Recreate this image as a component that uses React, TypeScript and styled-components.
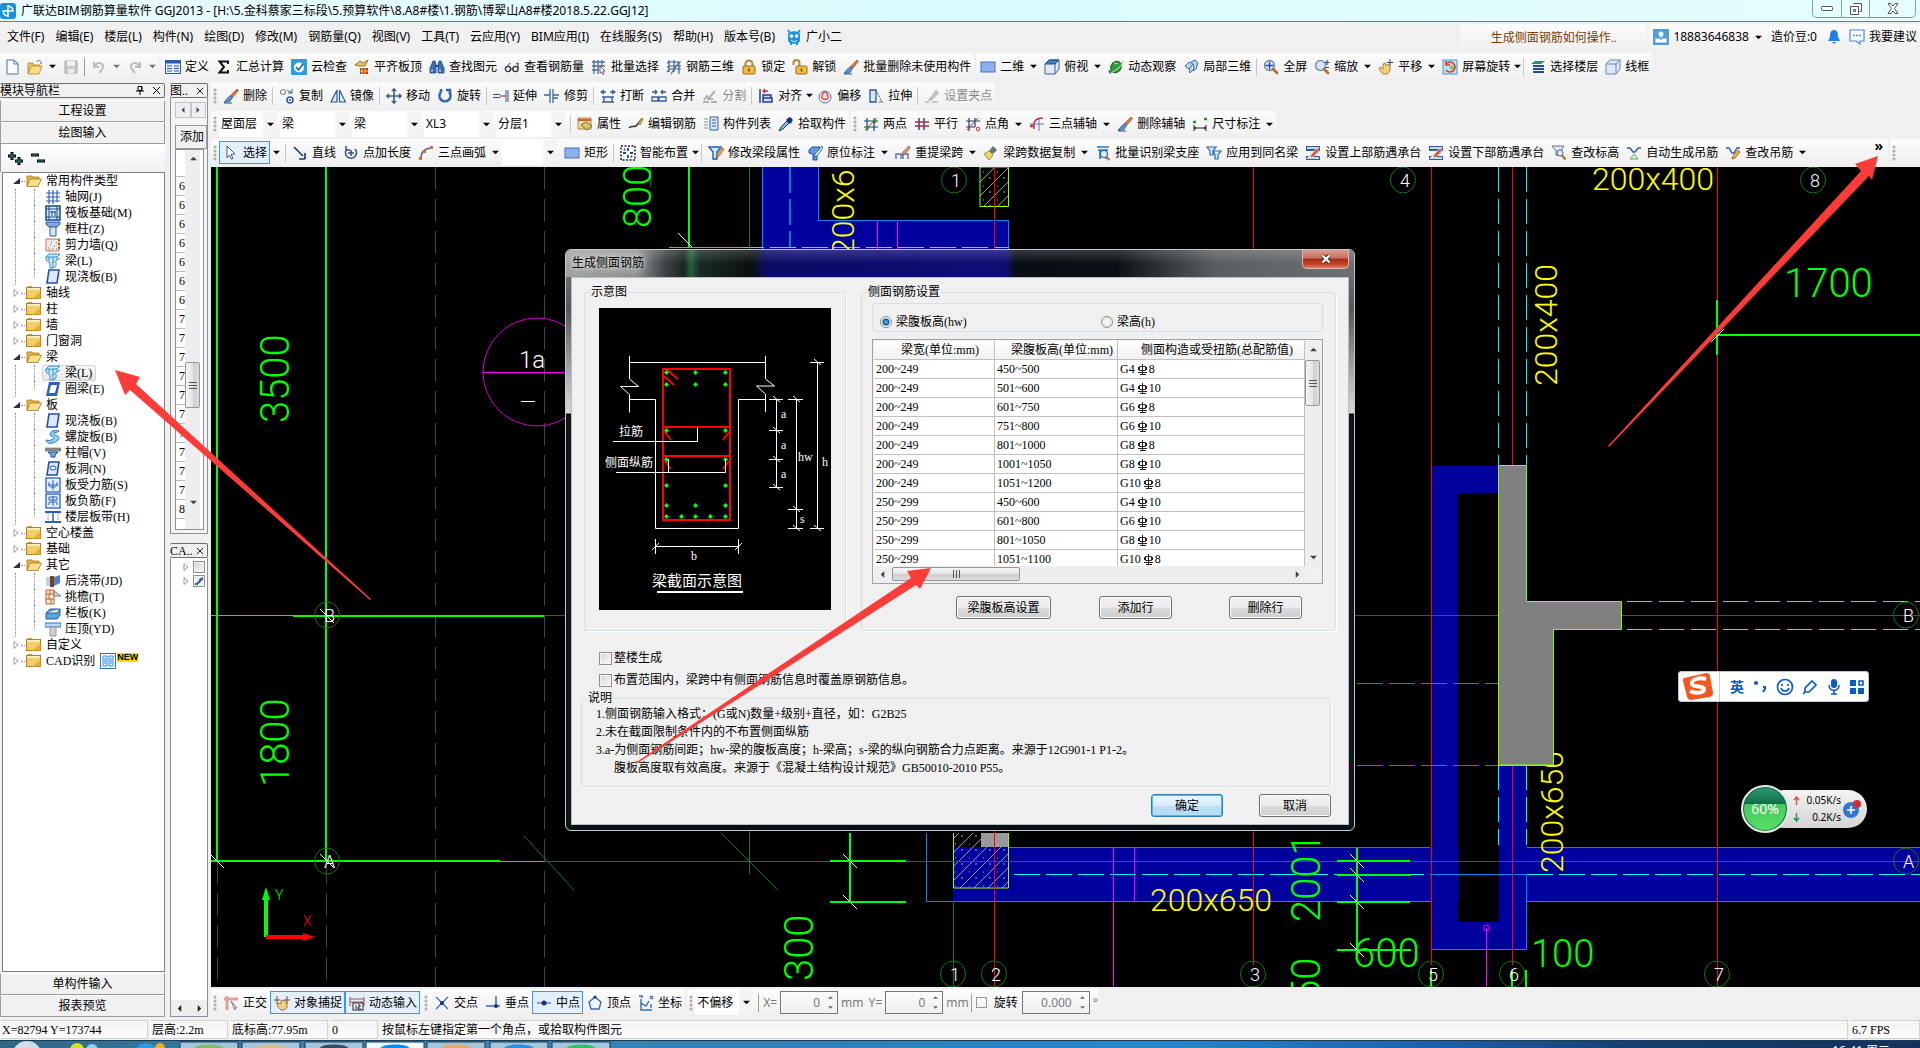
import React, { useState } from "react";
import type { ReactNode } from "react";
import styled, { createGlobalStyle, css } from "styled-components";

const UI = `"Noto Sans", "Noto Sans CJK SC", sans-serif`;
const SONG = `"Liberation Serif", "Noto Sans CJK SC", serif`;

const Global = createGlobalStyle`
  *, *::before, *::after { box-sizing: border-box; }
  body { margin: 0; background: #f0f0f0; font: 12px/16px ${UI}; color: #000; overflow: hidden; }
  button, input, select { font: inherit; color: inherit; margin: 0; }
  ul { list-style: none; margin: 0; padding: 0; }
`;

/* ---------- icon artwork, 16 x 16 ---------- */

const pen = (
  <>
    <path d="M14 1l1.5 1.5-6 7-2-2z" fill="#e8743b" stroke="#7a3b1c" strokeWidth=".6" />
    <path d="M7.5 7.5l2 2-2.5 4L3 14l-2 .5 3-4z" fill="#5e8fd0" stroke="#27507f" strokeWidth=".7" />
    <path d="M1 15h8" stroke="#27507f" />
  </>
);
const beam = (
  <>
    <path d="M1 4l3-3h11l-3 3v3l-4 3v5H5v-5L1 7z" fill="#cfe6fb" stroke="#2f8fd0" />
    <path d="M1 4h11l3-3M12 7l3-2M8 15l3-2V9M4 4v4M8 4v6" stroke="#2f8fd0" fill="none" />
  </>
);
const slab = <path d="M4 1h10l-2 13H2z" fill="#dbe9fb" stroke="#1f4fa8" strokeWidth="1.6" />;
const magnifier = (
  <>
    <circle cx="6.5" cy="6.5" r="5" fill="#d8e6f4" stroke="#7b8ba0" strokeWidth="1.4" />
    <path d="M10 10l4 4" stroke="#b56a2a" strokeWidth="2.6" strokeLinecap="round" />
  </>
);
const cube = (
  <path d="M1 5l4-4h10v9l-4 5H1zM1 5h10v10M11 5l4-4" fill="#dfe9f6" stroke="#6c86ad" />
);
const capPile = (
  <>
    <path d="M1 1h14v5H1zM1 11h14v4H1zM9 6h5l-5 5H4z" fill="#2b5fa5" />
    <path d="M2 3h11L3 13h11" stroke="#fff" strokeWidth="1.4" fill="none" />
    <path d="M12 3l2 2-6 7-3 1 1-3z" fill="#e2492d" stroke="#fff" strokeWidth=".5" />
  </>
);

const ART: Record<string, ReactNode> = {
  app: (
    <>
      <rect width="16" height="16" rx="3" fill="#1493e0" />
      <path d="M8 2v12M2.5 8h11M8 3a5 5 0 0 1 5 5M8 13a5 5 0 0 1-5-5" stroke="#fff" strokeWidth="1.6" fill="none" />
    </>
  ),
  file: <path d="M3 1h7l4 4v10H3zM10 1v4h4" fill="#fdfeff" stroke="#51709c" />,
  open: (
    <>
      <path d="M1 4h5l1 2h6v2H4l-2 6H1z" fill="#f5c758" stroke="#a87716" strokeWidth=".7" />
      <path d="M4 7h11l-3 8H1z" fill="#fbdc86" stroke="#a87716" strokeWidth=".7" />
      <path d="M9 3c2-2 4-2 5 0v2" stroke="#44689c" fill="none" />
    </>
  ),
  save: (
    <>
      <path d="M2 2h12v12H2z" fill="#c9c9c9" stroke="#a8a8a8" />
      <path d="M4 2h8v5H4zM5 10h6v4H5z" fill="#efefef" />
    </>
  ),
  undo: <path d="M3 3v5h5M4 7c2-4 8-4 8 1 0 3-3 4-4 6" stroke="#bcbcbc" strokeWidth="2" fill="none" />,
  redo: <path d="M13 3v5H8M12 7C10 3 4 3 4 8c0 3 3 4 4 6" stroke="#bcbcbc" strokeWidth="2" fill="none" />,
  define: (
    <>
      <rect x=".5" y="1.5" width="15" height="13" fill="#e9f1fb" stroke="#2a5caa" />
      <path d="M1 3h14" stroke="#2a5caa" strokeWidth="3" />
      <path d="M2 7h5M2 9.5h5M2 12h5M9 7h5M9 9.5h5M9 12h5" stroke="#2a5caa" />
    </>
  ),
  sigma: <path d="M12 5V2.5H3.5L8 8l-4.5 5.5H12V11" stroke="#111" strokeWidth="2" fill="none" />,
  cloudcheck: (
    <>
      <rect width="16" height="16" rx="1" fill="#2f9be4" />
      <circle cx="8" cy="8.5" r="5" fill="#fff" />
      <path d="M5 8l2.5 3L12 5" stroke="#1668b0" strokeWidth="1.6" fill="none" />
    </>
  ),
  flatten: (
    <>
      <path d="M1 6l5-4 3 2 5-3-3 6H5z" fill="#f1c44e" stroke="#7b5b16" strokeWidth=".8" />
      <path d="M6 9h8v6H6z" fill="#b23a22" />
      <path d="M8 9v6M11 9v6M6 12h8" stroke="#f5c758" />
    </>
  ),
  find: (
    <>
      <path d="M2 7l2-5h2l1 4v8H1V9zM14 7l-2-5h-2L9 6v8h6V9z" fill="#3c6fb2" stroke="#1d4680" strokeWidth=".8" />
      <path d="M7 7h2" stroke="#1d4680" strokeWidth="2" />
      <path d="M3 10v3M11 10v3" stroke="#cfe0f5" />
    </>
  ),
  glasses: (
    <>
      <circle cx="4" cy="10" r="2.6" fill="none" stroke="#333" strokeWidth="1.4" />
      <circle cx="11.5" cy="10" r="2.6" fill="none" stroke="#333" strokeWidth="1.4" />
      <path d="M6.6 10h2.4M3 8l3-4M14 9V4l-2 1" stroke="#333" fill="none" />
    </>
  ),
  batch: (
    <>
      <path d="M3 1v14M7 1v14M11 1v6M1 3h13M1 7h13M1 11h7" stroke="#4d6f9d" strokeWidth="1.3" />
      <path d="M9 7l5 5-2 .3 1 2.5-1.4.6-1-2.500L9 14z" fill="#fff" stroke="#444" strokeWidth=".8" />
    </>
  ),
  rebar3d: <path d="M3 1v12M8 1v12M13 3v12M1 13l3-3h11M1 4l3-1h11M1 8l3-1h11M5 15l8-12" stroke="#3e5f98" strokeWidth="1.2" fill="none" />,
  lock: (
    <>
      <path d="M4.5 7V5a3.500 3.500 0 0 1 7 0v2" stroke="#b28b37" strokeWidth="2" fill="none" />
      <rect x="2" y="7" width="12" height="8" rx="1" fill="#f2bb45" stroke="#9a6c14" />
      <path d="M8 9.500v3" stroke="#6b4708" strokeWidth="1.6" />
    </>
  ),
  unlock: (
    <>
      <path d="M1.500 6V4a3 3 0 0 1 6 0v3" stroke="#b28b37" strokeWidth="2" fill="none" />
      <rect x="4" y="7" width="11" height="8" rx="1" fill="#f2bb45" stroke="#9a6c14" />
      <path d="M9.500 9.500v3" stroke="#6b4708" strokeWidth="1.6" />
    </>
  ),
  pen,
  rect: <rect x="1" y="3" width="14" height="10" fill="#8db0ee" stroke="#4a6fc4" />,
  top: (
    <>
      <path d="M1 5l4-4h10v9l-4 5H1z" fill="#dfe9f6" stroke="#3b5f92" />
      <path d="M1 5l4-4h10l-4 4z" fill="#3f7cc6" stroke="#27507f" />
      <path d="M11 5v10" stroke="#3b5f92" />
    </>
  ),
  orbit: (
    <>
      <ellipse cx="8" cy="8" rx="5" ry="6" fill="#2f9a3a" stroke="#1c5c24" transform="rotate(35 8 8)" />
      <path d="M1 13C4 15 14 8 15 2M6 5c1-1 3-1 4 0" stroke="#9bd48b" strokeWidth="1.4" fill="none" />
      <path d="M0 11l2 4 2-3z" fill="#2b5fa5" />
    </>
  ),
  local3d: <path d="M2 7l4-4 4 2-4 5zM6 10l1 4 4-4-1-5M8 3l4-2 3 3-2 6-3 2" fill="#b7d4ef" stroke="#37699f" />,
  full: (
    <>
      {magnifier}
      <path d="M6.500 2.500v8M2.500 6.500h8" stroke="#1f4f96" strokeWidth="1.3" />
    </>
  ),
  zoom: (
    <>
      {magnifier}
      <path d="M13 1v5M10.500 3.500h5M11 8.500h4" stroke="#1f4f96" strokeWidth="1.2" />
    </>
  ),
  pan: (
    <>
      <path d="M2 8l3 2V5l2-1 1 3 2-2 2 2v5l-3 3H5l-4-5z" fill="#f5cf7c" stroke="#8a6a24" strokeWidth=".8" />
      <path d="M12 0v7M8.500 3.500h7" stroke="#2c4b7a" />
    </>
  ),
  rotscreen: (
    <>
      <rect x="1" y="1" width="14" height="14" fill="#bfe3f7" stroke="#3d9bd0" />
      <path d="M4 5a5 5 0 1 1 0 6M4 2v4h4" stroke="#e03a2d" strokeWidth="1.7" fill="none" />
      <path d="M7 9l3-3 2 3-2 2z" fill="#7cc142" />
    </>
  ),
  floors: (
    <>
      <path d="M1 5l4-3h10l-4 3z" fill="#2c8f6b" />
      <path d="M3 7h11M3 10h11M3 13h11" stroke="#234f8f" strokeWidth="2" />
    </>
  ),
  cube,
  copy: (
    <>
      <circle cx="4" cy="4" r="2.5" fill="none" stroke="#8a8a8a" strokeWidth="1.2" />
      <circle cx="11" cy="12" r="3" fill="none" stroke="#2b5a96" strokeWidth="1.5" />
      <circle cx="11" cy="12" r="1" fill="#2b5a96" />
      <path d="M8 2l5 3M13 1v4H9" stroke="#2b5a96" fill="none" />
    </>
  ),
  mirror: <path d="M7 2v12H1zM9.500 2v12h6z" fill="#e4eefa" stroke="#2a5a9a" strokeWidth="1.2" />,
  move: <path d="M8 1v14M1 8h14M6 3l2-2 2 2M6 13l2 2 2-2M3 6L1 8l2 2M13 6l2 2-2 2" stroke="#41618f" strokeWidth="1.6" fill="none" />,
  rotate: <path d="M4 4a5.500 5.500 0 1 0 8 0M9 2h4v4M4 4V1" stroke="#2b64b8" strokeWidth="2.6" fill="none" />,
  extend: (
    <>
      <path d="M0 6.500h7M0 9.500h7" stroke="#2b4f86" strokeWidth="1.2" />
      <path d="M7 8h5" stroke="#d65a3a" strokeWidth="2" strokeDasharray="2 1" />
      <path d="M13 2v12M15 2v12" stroke="#2b4f86" />
    </>
  ),
  trim: <path d="M6 1v14M9 1v14M0 7h6M9 7h6M9 10h5" stroke="#36669e" strokeWidth="1.3" />,
  breakit: <path d="M1 4h5M4 2L1 4l3 2M15 4h-5M12 2l3 2-3 2M2 9h12M2 14h12M4 9v5M12 9v5" stroke="#3a5d92" strokeWidth="1.3" fill="none" />,
  merge: <path d="M1 4h5M4 2l2 2-2 2M15 4h-5M12 2l-2 2 2 2M1 9h6v4H1zM8 9h7v4H8z" stroke="#3a5d92" strokeWidth="1.3" fill="none" />,
  split: <path d="M1 14h6M9 14h6M2 12l3-4 2 2 6-7M5 11h6" stroke="#b0b0b0" strokeWidth="2" fill="none" />,
  align: (
    <>
      <path d="M2 1v14" stroke="#1f3f92" strokeWidth="1.5" />
      <path d="M5 7h8v3H5zM5 10h9v4H5z" fill="#cadcf3" stroke="#1f3f92" strokeWidth="1.5" />
      <path d="M10 3H5M7 1L5 3l2 2" stroke="#c4303c" strokeWidth="1.3" fill="none" />
    </>
  ),
  offset: (
    <>
      <circle cx="8" cy="9" r="6" fill="#e8eef6" stroke="#55759f" />
      <path d="M8 4c2 0 4 5 3 6-1 2-5 2-6 0-1-1 1-6 3-6z" fill="#f6d7d3" stroke="#c94a3c" strokeWidth="1.3" />
    </>
  ),
  stretch: (
    <>
      <path d="M2 2h6v12H2z" fill="#dce9f8" stroke="#2c5690" strokeWidth="1.3" />
      <path d="M8 2l6 12M11 14h4" stroke="#2c5690" strokeDasharray="2 1" />
    </>
  ),
  grip: <path d="M1 14h4M8 14h6M5 12l7-9 2 2-7 7z" stroke="#bcbcbc" fill="#cfcfcf" strokeWidth="1.5" />,
  props: (
    <>
      <path d="M1 2h13v11H1z" fill="#f3d59a" stroke="#b58536" />
      <path d="M1 4h13" stroke="#c8632c" strokeWidth="2" />
      <path d="M4 9l5-3 6 4-5 4z" fill="#e8c36a" stroke="#4c7a3a" />
    </>
  ),
  editbar: (
    <>
      <path d="M1 12c3-4 5 1 8-3l5-6" stroke="#333" strokeWidth="1.5" fill="none" />
      <path d="M10 7l4-5 1 1-3 6z" fill="#e2a03a" stroke="#704a10" strokeWidth=".6" />
    </>
  ),
  list: (
    <>
      <path d="M1 3h4M1 6h4M1 9h4M1 12h4" stroke="#8093ac" />
      <path d="M7 1h8v13H7z" fill="#d7e5f6" stroke="#39608f" />
      <path d="M9 4h4M9 7h4M9 10h4" stroke="#39608f" />
    </>
  ),
  picker: (
    <>
      <path d="M10 2c2-2 6 1 4 4l-2 2-4-4z" fill="#17386c" />
      <path d="M9 5l2 2-6 6-4 2 2-4z" fill="#8bbcf0" stroke="#17386c" />
    </>
  ),
  twopt: (
    <>
      <path d="M4 2v13M11 2v13M1 5h14M1 11h14" stroke="#1d3f7a" strokeWidth="1.2" />
      <path d="M2 14L14 2" stroke="#c1303a" />
      <path d="M10 4h3v3h-3zM3 10h3v3H3z" fill="#2a8c2f" />
    </>
  ),
  parallel: (
    <>
      <path d="M5 2v12M10 2v12" stroke="#1d3f7a" strokeWidth="1.4" />
      <path d="M1 6h14M1 10h14" stroke="#b5283c" strokeWidth="1.4" />
    </>
  ),
  angle: (
    <>
      <path d="M4 2v13M10 2v9M1 5h14M1 11h9" stroke="#1d3f7a" strokeWidth="1.2" />
      <path d="M2 14L13 2" stroke="#c1303a" />
      <circle cx="13" cy="13" r="1.8" fill="none" stroke="#c1303a" />
    </>
  ),
  arcaxis: (
    <>
      <path d="M1 8h14M10 2v13" stroke="#5b7db8" />
      <path d="M14 2C6 2 4 6 5 13" stroke="#c1303a" strokeWidth="1.6" fill="none" />
      <circle cx="2.5" cy="10" r="1.5" fill="#c1303a" />
    </>
  ),
  dim: (
    <>
      <path d="M2 9v6M14 9v6M2 12h12" stroke="#222" />
      <path d="M4 11l-2 1 2 1M12 11l2 1-2 1" stroke="#222" fill="none" />
      <path d="M1 6h3M12 3h3" stroke="#2a8c2f" strokeWidth="2.5" />
    </>
  ),
  cursor: <path d="M4 1l8 8-4 .4 2 4-1.600.8-2-4L4 13z" fill="#fff" stroke="#44577a" />,
  line: <path d="M2 2l9 9M13 14H7M13 14V8" stroke="#1d3f7a" strokeWidth="1.7" fill="none" />,
  ptlen: <path d="M4 4a5.500 5.500 0 1 0 8 0M8 5v6M5 8h6M3 1v4h4" stroke="#2f5286" strokeWidth="1.5" fill="none" />,
  arc: (
    <>
      <path d="M3 14C3 7 7 3 14 3" stroke="#506c98" strokeWidth="1.5" fill="none" />
      <path d="M1 12h3v3H1zM5 5h3v3H5zM12 1h3v3h-3z" fill="#e0663c" />
    </>
  ),
  smart: (
    <>
      <path d="M1 1h14v14H1z" fill="none" stroke="#222" strokeDasharray="2 1.5" strokeWidth="1.5" />
      <path d="M8 3v3M8 10v3M3 8h3M10 8h3M4 4l1 1M12 12l-1-1" stroke="#1d3f7a" strokeWidth="1.8" />
    </>
  ),
  beamedit: (
    <>
      <path d="M1 2h12l-4 5v7H5V7z" fill="#cfe6fb" stroke="#1f62b0" strokeWidth="1.4" />
      <path d="M14 3L9 10l-1 3 3-2 5-7z" fill="#f2bb45" stroke="#7b3b16" strokeWidth=".7" />
    </>
  ),
  insitu: (
    <>
      <path d="M2 5l3-3h8v4l-3 3v6H6V9L2 8z" fill="#5f9ade" stroke="#1f4f96" />
      <path d="M15 1L8 9l-1 3 3-1 6-8z" fill="#dcebf9" stroke="#1f4f96" strokeWidth=".8" />
    </>
  ),
  respan: (
    <>
      <path d="M1 14V9h5v5M8 14V9h5v5" stroke="#5878a8" strokeWidth="1.5" fill="none" />
      <path d="M14 1L8 7l-1 3 3-1 5-6z" fill="#e2a08a" stroke="#7b3b16" strokeWidth=".7" />
    </>
  ),
  brush: (
    <>
      <path d="M10 1l4 4-4 4-4-3z" fill="#6b6f78" />
      <path d="M6 6l4 4-4 5-5-6z" fill="#eadc60" stroke="#877a1c" strokeWidth=".8" />
    </>
  ),
  identify: (
    <>
      <path d="M2 2h12M3 5h10M5 5v9M11 5v9" stroke="#2a73b8" strokeWidth="1.7" />
      <circle cx="9" cy="9" r="3.5" fill="#dfeefb" stroke="#3d6b99" strokeWidth="1.2" />
      <path d="M11.500 12l3 3" stroke="#b56a2a" strokeWidth="2" />
    </>
  ),
  applybeam: <path d="M1 2h9l-3 4v4H4V6zM7 6h8l-3 4v4H9v-4z" fill="#d5e9fb" stroke="#2a6cb4" strokeWidth="1.2" />,
  capPile,
  elev: (
    <>
      <path d="M1 1h12l-3 5v4H5V6z" fill="#dfe6ee" stroke="#65758c" />
      <circle cx="9" cy="8" r="3" fill="#e7f1fb" stroke="#3d5f8f" />
      <path d="M11 10.500l3.500 4" stroke="#b56a2a" strokeWidth="2" />
    </>
  ),
  hanger: (
    <>
      <path d="M1 3h3l3 4h2l3-4h3" stroke="#2a5fa8" strokeWidth="1.4" fill="none" />
      <path d="M8 9l4 5H4z" fill="#dff2dc" stroke="#6aae5b" />
    </>
  ),
  hangeredit: (
    <>
      <path d="M1 3h3l3 5h2l3-5h3" stroke="#2a5fa8" strokeWidth="1.4" fill="none" />
      <path d="M13 5l-5 6-1 3 3-1 5-6z" fill="#f2bb45" stroke="#7b3b16" strokeWidth=".7" />
    </>
  ),
  ortho: (
    <>
      <path d="M1 4h14M4 1v14" stroke="#dba2a2" strokeWidth="3" />
      <path d="M8 6l6 7-3 0 1 2z" fill="#e7edf5" stroke="#6d7d95" />
    </>
  ),
  snap: (
    <>
      <path d="M3 1v8M13 1v8" stroke="#8c3b3b" />
      <path d="M0 5h6M10 5h6" stroke="#8c3b3b" />
      <path d="M4 8l3 1V5l4 1 2 3v4l-3 2H7l-4-4z" fill="#f2cf86" stroke="#8a6a24" strokeWidth=".8" />
    </>
  ),
  dynin: (
    <>
      <path d="M1 2v9M15 2v9M1 4h14M1 7h14" stroke="#9a5353" />
      <rect x="4" y="8" width="10" height="7" fill="#f7f7f7" stroke="#222" />
      <path d="M7 10v4M9 10h2v2H9v2h3" stroke="#222" fill="none" />
    </>
  ),
  cross: (
    <>
      <path d="M2 2l12 12M14 2L2 14" stroke="#3a6cae" strokeWidth="1.3" />
      <circle cx="8" cy="8" r="2" fill="#14386e" />
    </>
  ),
  perp: (
    <>
      <path d="M11 1v10M1 11h14" stroke="#3a6cae" strokeWidth="1.5" />
      <circle cx="11" cy="11" r="2" fill="#14386e" />
    </>
  ),
  mid: (
    <>
      <path d="M1 8h14" stroke="#7ea2d6" strokeWidth="2" />
      <circle cx="8" cy="8" r="2.5" fill="#14386e" />
    </>
  ),
  vertex: (
    <>
      <path d="M8 2l6 5-2 7H4L2 7z" fill="#eef5fd" stroke="#3a6cae" strokeWidth="1.4" />
      <circle cx="8" cy="2" r="1.5" fill="#14386e" />
    </>
  ),
  coord: <path d="M3 4v11h11M3 8l5 3 3-5M1 1h3v2M12 1l3 3M15 1l-3 3M13 9v4" stroke="#3a6cae" strokeWidth="1.4" fill="none" />,
  robot: (
    <>
      <path d="M2 6c0-5 12-5 12 0v5c0 5-12 5-12 0z" fill="#1d93e8" />
      <circle cx="5.5" cy="7" r="1.8" fill="#fff" />
      <circle cx="10.5" cy="7" r="1.8" fill="#fff" />
      <path d="M5 11c2 2 4 2 6 0" stroke="#fff" fill="none" />
      <path d="M4 4L2 1M12 4l2-3M5 13v3M11 13v3" stroke="#1d93e8" strokeWidth="2" />
    </>
  ),
  user: (
    <>
      <rect width="16" height="16" rx="1" fill="#4c9fd8" />
      <path d="M3 10h3l2 2 2-2h3v3H3zM8 3v6" stroke="#fff" strokeWidth="1.2" fill="#fff" />
      <circle cx="8" cy="5" r="2.5" fill="#fff" />
    </>
  ),
  bell: <path d="M8 1c4 0 4 4 4 7l2 4H2l2-4c0-3 0-7 4-7zM6 13h4l-2 2z" fill="#1f80ea" />,
  comment: (
    <>
      <path d="M1 1h14v11h-4v3l-4-3H1z" fill="#fff" stroke="#3b8ae2" strokeWidth="1.2" />
      <path d="M4 6.500h2M7 6.500h2M10 6.500h2" stroke="#3b8ae2" strokeWidth="1.5" />
    </>
  ),
  folder: (
    <>
      <path d="M1 3l1-2h4l1 2z" fill="#d7a02a" />
      <rect x=".5" y="2.5" width="14" height="11" fill="#f4cf69" stroke="#b0801c" />
      <path d="M1 4h13" stroke="#fdeeb4" strokeWidth="2" />
      <path d="M15 6v8H6z" fill="#dc9c1b" opacity=".6" />
    </>
  ),
  folderopen: (
    <>
      <path d="M1 3h5l1 1h6v4H4l-3 5z" fill="#e9b640" stroke="#a87716" strokeWidth=".8" />
      <path d="M4 6h11.500L12 13.500H1z" fill="#fbdf8c" stroke="#a87716" strokeWidth=".8" />
    </>
  ),
  axis: <path d="M4 1v14M8 1v14M12 1v12M1 4h14M1 8h14M1 12h14" stroke="#3062c4" strokeWidth="1.2" />,
  raft: (
    <>
      <rect x="1" y="1" width="14" height="14" fill="#dce9fb" stroke="#174a8e" strokeWidth="1.5" />
      <path d="M4 1v14M12 1v14M1 4h14M1 12h14M7 6v5M10 6v5M5 7h6" stroke="#174a8e" />
    </>
  ),
  column: (
    <>
      <path d="M5 5h6v10H5z" fill="#d9e6f8" stroke="#2c5ca6" />
      <path d="M1 1h14v2l-3 3H4L1 3z" fill="#7fa6de" stroke="#2c5ca6" />
    </>
  ),
  wall: (
    <>
      <rect x="1" y="2" width="13" height="12" fill="#eceae8" stroke="#c97a42" />
      <path d="M3 11h1M5 8h1M7 12h1M9 9h1M6 5h1M11 12h1M11 6h1M4 13h1" stroke="#666" />
      <path d="M14 2v12" stroke="#c05a1e" strokeWidth="2" strokeDasharray="2 2" />
    </>
  ),
  beam,
  slab,
  ring: (
    <>
      <path d="M4 1h11l-3 14H1z" fill="#2b5fc0" />
      <path d="M6 4h6l-2 8H4z" fill="#fff" />
    </>
  ),
  spiral: <path d="M14 2C8 0 3 4 6 7c3 1 5 2 0 4-2 1-4 0-5 0 1 5 8 4 12 0 4-5-6-4-4-7 1-1 4 0 5-2z" fill="#8fd0f6" stroke="#1d7ec8" />,
  cap: (
    <>
      <path d="M0 3h16v3H0z" fill="#8c8c8c" stroke="#666" strokeWidth=".6" />
      <path d="M3 7h10l-3 3v2H6v-2z" fill="#6fa4e8" stroke="#1f4fa8" />
    </>
  ),
  hole: (
    <>
      {slab}
      <ellipse cx="8" cy="7" rx="3" ry="2" fill="#fff" stroke="#1f4fa8" />
    </>
  ),
  forcebar: (
    <>
      <rect x="1" y="1" width="14" height="14" fill="#e6effc" stroke="#2b5fc0" strokeWidth="1.3" />
      <path d="M8 3v10M3 8h10M4 5v3c0 3 7 3 8 0V5" stroke="#2b5fc0" fill="none" />
    </>
  ),
  negbar: (
    <>
      <rect x="1" y="1" width="14" height="14" fill="#e6effc" stroke="#2b5fc0" strokeWidth="1.3" />
      <path d="M8 3v10M4 4h8v3H4zM4 12V9h8v3" stroke="#2b5fc0" fill="none" />
    </>
  ),
  band: (
    <>
      <path d="M0 3h16M0 13h16" stroke="#2b5fc0" strokeWidth="2" />
      <path d="M8 3v10" stroke="#2b5fc0" strokeWidth="1.5" />
      <path d="M3 4v8M13 4v8" stroke="#777" strokeDasharray="1 1" />
    </>
  ),
  pour: (
    <>
      <path d="M1 4h5v9H1z" fill="#bcd1ee" />
      <path d="M5 3h4v11H5z" fill="#7b3f16" />
      <path d="M9 4l6-2v8l-6 3z" fill="#4d7fd0" />
    </>
  ),
  eave: (
    <>
      <path d="M1 1h8v14H1z" fill="#fbe9da" stroke="#c05a1e" />
      <path d="M1 5h8M1 10h8M5 1v4M4 5v5M6 10v5" stroke="#c05a1e" />
      <path d="M9 2l7 5H9z" fill="#ddd" stroke="#777" />
    </>
  ),
  rail: <path d="M1 8l4-4h10v6l-3 4H1zM1 8h11l3-4" fill="#5fa2d8" stroke="#1f5f9a" />,
  coping: (
    <>
      <path d="M0 2h16v4H0z" fill="#b9d8f6" stroke="#2a73c8" />
      <path d="M5 6h6v9H5z" fill="#cfcfcf" stroke="#999" />
    </>
  ),
  cad: (
    <>
      <rect x=".5" y=".5" width="15" height="15" fill="#fff" stroke="#3a6fb4" />
      <path d="M3 3h4v10H3zM9 3h4v10H9z" fill="#e4f0fc" stroke="#2a8fe0" />
      <path d="M4 6h2M4 8h2M4 10h2M10 6h2M10 8h2M10 10h2" stroke="#2a8fe0" />
    </>
  ),
};

const Svg = styled.svg`
  display: block;
  flex: none;
`;
const Icon = ({ name, size = 16 }: { name: string; size?: number }) => (
  <Svg width={size} height={size} viewBox="0 0 16 16" fill="none" aria-hidden="true">
    {ART[name]}
  </Svg>
);
const Tri = ({ dir = "down", color = "#000", w = 7 }: { dir?: "down" | "up" | "left" | "right"; color?: string; w?: number }) => {
  const turn = { down: 0, up: 180, left: 90, right: 270 }[dir];
  return (
    <Svg width={w} height={w} viewBox="0 0 8 8" aria-hidden="true">
      <path d="M0 2h8L4 6z" fill={color} transform={`rotate(${turn} 4 4)`} />
    </Svg>
  );
};

/* ---------- shell ---------- */

const Page = styled.div`
  position: relative;
  height: 100vh;
  display: flex;
  flex-direction: column;
  overflow: hidden;
  background: #f0f0f0;
`;
const TitleBar = styled.header`
  flex: none;
  display: flex;
  align-items: center;
  gap: 5px;
  height: 22px;
  border-bottom: 1px solid #6e7b80;
  background:
    radial-gradient(ellipse at 34px 24px, #f0a0b8 0, transparent 22px),
    radial-gradient(ellipse at 88px 24px, #cfe39a 0, transparent 18px),
    radial-gradient(ellipse at 400px 10px, #fff 0, transparent 300px),
    linear-gradient(90deg, #eafcff, #d9fbfd 50%, #e6feff);
`;
const Title = styled.h1`
  flex: 1;
  margin: 0;
  font: 400 12px/18px ${UI};
  white-space: nowrap;
`;
const WinButtons = styled.div`
  display: flex;
  align-self: flex-start;
  height: 18px;
  margin-right: 4px;
  border: 1px solid #8b9a9e;
  border-top: 0;
  border-radius: 0 0 5px 5px;
`;
const WinButton = styled.button<{ $wide?: boolean }>`
  display: flex;
  align-items: center;
  justify-content: center;
  width: ${(p) => (p.$wide ? 46 : 28)}px;
  padding: 0;
  border: 0;
  background: transparent;
  & + & {
    border-left: 1px solid #8b9a9e;
  }
`;
const MenuBar = styled.nav`
  flex: none;
  display: flex;
  align-items: center;
  height: 30px;
  padding-left: 1px;
`;
const MenuItem = styled.button`
  display: flex;
  align-items: center;
  gap: 4px;
  height: 22px;
  padding: 0 5px 0 6px;
  border: 0;
  background: none;
  white-space: nowrap;
`;
const Spacer = styled.div`
  flex: 1;
`;
const band = css`
  background: linear-gradient(#fcfcfc, #f3f3f3 70%, #efefef);
  border-radius: 2px;
`;
const Hint = styled.a`
  ${band}
  width: 187px;
  height: 27px;
  margin-right: 2px;
  padding: 0 2px;
  color: #7a3c00;
  font: 12px/28px ${SONG};
  text-align: center;
  text-decoration: none;
`;
const Account = styled.div`
  ${band}
  display: flex;
  align-items: center;
  height: 27px;
`;

/* ---------- toolbars ---------- */

const Strip = styled.div<{ $h?: number }>`
  flex: none;
  display: flex;
  align-items: center;
  gap: 2px;
  height: ${(p) => p.$h ?? 29}px;
`;
const Group = styled.div<{ $grow?: boolean }>`
  ${band}
  display: flex;
  align-items: center;
  height: 27px;
  flex: ${(p) => (p.$grow ? "1" : "none")};
`;
const Grip = styled.i`
  flex: none;
  width: 8px;
  height: 16px;
  background: radial-gradient(circle at 50% 50%, #b0b0b0 1px, transparent 2px) 1px 0 / 6px 4px repeat-y;
`;
const Sep = styled.i<{ $dark?: boolean }>`
  flex: none;
  width: 1px;
  height: 18px;
  margin: 0 2px;
  background: ${(p) => (p.$dark ? "#9a9a9a" : "#c6c6c6")};
`;
const ToolButton = styled.button<{ $on?: boolean }>`
  flex: none;
  display: flex;
  align-items: center;
  gap: 4px;
  height: 23px;
  padding: 0 3px 0 4px;
  border: 0;
  background: ${(p) => (p.$on ? "#e3effb" : "transparent")};
  box-shadow: ${(p) => (p.$on ? "inset 0 0 0 1px #3399ff" : "none")};
  white-space: nowrap;
  &:disabled {
    color: #8a8a8a;
  }
`;
const Drop = styled.button<{ $tight?: boolean }>`
  flex: none;
  display: flex;
  align-items: center;
  justify-content: center;
  width: ${(p) => (p.$tight ? 8 : 13)}px;
  height: 23px;
  padding: 0;
  border: 0;
  background: none;
`;

type ToolDef = { icon: string; text?: string; drop?: boolean; tight?: boolean; on?: boolean; off?: boolean; name?: string };
const Tool = ({ icon, text, drop, tight, on, off, name }: ToolDef) => (
  <>
    <ToolButton type="button" $on={on} disabled={off} aria-label={name}>
      <Icon name={icon} />
      {text}
    </ToolButton>
    {(drop || tight) && (
      <Drop type="button" $tight={tight} aria-label={`${text ?? name}选项`}>
        <Tri color={off ? "#777" : "#000"} />
      </Drop>
    )}
  </>
);
const Tools = ({ items }: { items: (ToolDef | "|")[] }) => (
  <>{items.map((t, i) => (t === "|" ? <Sep key={i} /> : <Tool key={i} {...t} />))}</>
);

const ComboBox = styled.span<{ $w: number }>`
  flex: none;
  display: grid;
  width: ${(p) => p.$w}px;
  height: 25px;
  align-items: center;
  background: linear-gradient(90deg, #fff calc(100% - 14px), #f4f4f4 0);
  margin-right: 3px;
  & > * {
    grid-area: 1 / 1;
  }
  & > svg {
    justify-self: end;
    margin-right: 3px;
    pointer-events: none;
  }
`;
const ComboSelect = styled.select`
  appearance: none;
  width: 100%;
  height: 25px;
  padding: 0 14px 0 2px;
  border: 0;
  background: transparent;
`;
const Combo = ({ value, w, name }: { value: string; w: number; name: string }) => (
  <ComboBox $w={w}>
    <ComboSelect aria-label={name} defaultValue={value}>
      <option>{value}</option>
    </ComboSelect>
    <Tri />
  </ComboBox>
);
const More = styled.button`
  align-self: flex-start;
  padding: 0 5px 0 0;
  border: 0;
  background: none;
  font-size: 14px;
  font-weight: 700;
  line-height: 13px;
`;
const Tail = styled.i`
  width: 22px;
`;

const mainTools: (ToolDef | "|")[] = [
  { icon: "define", text: "定义" },
  { icon: "sigma", text: "汇总计算" },
  { icon: "cloudcheck", text: "云检查" },
  { icon: "flatten", text: "平齐板顶" },
  { icon: "find", text: "查找图元" },
  { icon: "glasses", text: "查看钢筋量" },
  { icon: "batch", text: "批量选择" },
  { icon: "rebar3d", text: "钢筋三维" },
  { icon: "lock", text: "锁定" },
  { icon: "unlock", text: "解锁" },
  { icon: "pen", text: "批量删除未使用构件" },
];
const viewTools: (ToolDef | "|")[] = [
  { icon: "rect", text: "二维", drop: true },
  { icon: "top", text: "俯视", drop: true },
  { icon: "orbit", text: "动态观察" },
  { icon: "local3d", text: "局部三维" },
  "|",
  { icon: "full", text: "全屏" },
  { icon: "zoom", text: "缩放", drop: true },
  { icon: "pan", text: "平移", drop: true },
  { icon: "rotscreen", text: "屏幕旋转", tight: true },
  "|",
  { icon: "floors", text: "选择楼层" },
  { icon: "cube", text: "线框" },
];
const editTools: (ToolDef | "|")[] = [
  { icon: "pen", text: "删除" },
  "|",
  { icon: "copy", text: "复制" },
  { icon: "mirror", text: "镜像" },
  "|",
  { icon: "move", text: "移动" },
  { icon: "rotate", text: "旋转" },
  "|",
  { icon: "extend", text: "延伸" },
  { icon: "trim", text: "修剪" },
  "|",
  { icon: "breakit", text: "打断" },
  { icon: "merge", text: "合并" },
  { icon: "split", text: "分割", off: true },
  "|",
  { icon: "align", text: "对齐", tight: true },
  { icon: "offset", text: "偏移" },
  { icon: "stretch", text: "拉伸" },
  "|",
  { icon: "grip", text: "设置夹点", off: true },
];
const partTools: ToolDef[] = [
  { icon: "props", text: "属性" },
  { icon: "editbar", text: "编辑钢筋" },
  { icon: "list", text: "构件列表" },
  { icon: "picker", text: "拾取构件" },
];
const axisTools: ToolDef[] = [
  { icon: "twopt", text: "两点" },
  { icon: "parallel", text: "平行" },
  { icon: "angle", text: "点角", drop: true },
  { icon: "arcaxis", text: "三点辅轴", drop: true },
  { icon: "pen", text: "删除辅轴" },
  { icon: "dim", text: "尺寸标注", drop: true },
];
const drawTools: (ToolDef | "|")[] = [
  { icon: "cursor", text: "选择", on: true, drop: true },
  "|",
  { icon: "line", text: "直线" },
  { icon: "ptlen", text: "点加长度" },
  { icon: "arc", text: "三点画弧", drop: true },
];
const beamTools: (ToolDef | "|")[] = [
  { icon: "rect", text: "矩形" },
  "|",
  { icon: "smart", text: "智能布置", tight: true },
  "|",
  { icon: "beamedit", text: "修改梁段属性" },
  { icon: "insitu", text: "原位标注", drop: true },
  { icon: "respan", text: "重提梁跨", drop: true },
  { icon: "brush", text: "梁跨数据复制", drop: true },
  { icon: "identify", text: "批量识别梁支座" },
  { icon: "applybeam", text: "应用到同名梁" },
  { icon: "capPile", text: "设置上部筋遇承台" },
  { icon: "capPile", text: "设置下部筋遇承台" },
  { icon: "elev", text: "查改标高" },
  { icon: "hanger", text: "自动生成吊筋" },
  { icon: "hangeredit", text: "查改吊筋", drop: true },
];

/* ---------- navigation dock ---------- */

const Body = styled.div`
  flex: 1;
  display: flex;
  min-height: 0;
`;
const Dock = styled.aside<{ $w: number; $gap: number }>`
  flex: none;
  display: flex;
  flex-direction: column;
  width: ${(p) => p.$w}px;
  margin-right: ${(p) => p.$gap}px;
  padding: 2px 0 1px;
  font-family: ${SONG};
  min-height: 0;
`;
const DockHead = styled.div<{ $slim?: boolean }>`
  flex: none;
  display: flex;
  align-items: center;
  gap: ${(p) => (p.$slim ? 0 : 8)}px;
  height: 15px;
  margin-bottom: ${(p) => (p.$slim ? 0 : 2)}px;
  padding-right: 3px;
  border: 1px solid #6f6f6f;
  border-left: 0;
  border-radius: 2px;
  line-height: 14px;
  white-space: nowrap;
`;
const HeadText = styled.span`
  flex: 1;
`;
const HeadButton = styled.button`
  display: flex;
  padding: 0;
  border: 0;
  background: none;
`;
const Shelf = styled.button`
  flex: none;
  height: 22px;
  padding: 0;
  border: 1px solid #9b9b9b;
  border-top-color: #fff;
  background: #f1f1f1;
  line-height: 18px;
`;
const TreeTools = styled.div`
  flex: none;
  display: flex;
  gap: 6px;
  height: 28px;
  padding: 7px 0 0 6px;
  border-left: 1px solid #9b9b9b;
  background: linear-gradient(#fff, #f1f1f1);
`;
const TreeBox = styled.div`
  flex: 1;
  min-height: 0;
  margin: 0 0 1px 2px;
  border: 1px solid #7c8088;
  background: #fff;
  overflow: hidden;
`;
const Branch = styled.button`
  display: flex;
  align-items: center;
  height: 16px;
  width: 100%;
  padding: 0 0 0 10px;
  border: 0;
  background: none;
  white-space: nowrap;
`;
const Stub = styled.i`
  width: 4px;
  margin: 0 1px;
  border-top: 1px dotted #888;
`;
const BranchName = styled.span`
  margin: 0 5px 0 4px;
`;
const Leaves = styled.ul`
  margin-left: 12px;
  border-left: 1px dotted #888;
`;
const Leaf = styled.li`
  position: relative;
  padding-left: 18px;
  &::before {
    content: "";
    position: absolute;
    top: 0;
    bottom: 0;
    border-left: 1px dotted #888;
  }
  &:last-child::before {
    bottom: 8px;
  }
`;
const LeafButton = styled.button<{ $on?: boolean }>`
  display: flex;
  align-items: center;
  gap: 4px;
  height: 16px;
  margin-left: 8px;
  padding: 0 4px 0 3px;
  border: 0;
  border-radius: 3px;
  background: ${(p) => (p.$on ? "linear-gradient(#fafafa, #e6e6e6)" : "none")};
  box-shadow: ${(p) => (p.$on ? "inset 0 0 0 1px #d5d5d5" : "none")};
  white-space: nowrap;
`;
const NewTag = styled.b`
  align-self: flex-start;
  margin-left: 1px;
  font: 700 9px/9px "Liberation Sans", sans-serif;
  background: #ffd800;
`;

type Node = { name: string; kids?: [string, string][]; on?: number; cad?: boolean };
const tree: Node[] = [
  {
    name: "常用构件类型",
    kids: [["axis", "轴网(J)"], ["raft", "筏板基础(M)"], ["column", "框柱(Z)"], ["wall", "剪力墙(Q)"], ["beam", "梁(L)"], ["slab", "现浇板(B)"]],
  },
  { name: "轴线" },
  { name: "柱" },
  { name: "墙" },
  { name: "门窗洞" },
  { name: "梁", kids: [["beam", "梁(L)"], ["ring", "圈梁(E)"]], on: 0 },
  {
    name: "板",
    kids: [["slab", "现浇板(B)"], ["spiral", "螺旋板(B)"], ["cap", "柱帽(V)"], ["hole", "板洞(N)"], ["forcebar", "板受力筋(S)"], ["negbar", "板负筋(F)"], ["band", "楼层板带(H)"]],
  },
  { name: "空心楼盖" },
  { name: "基础" },
  { name: "其它", kids: [["pour", "后浇带(JD)"], ["eave", "挑檐(T)"], ["rail", "栏板(K)"], ["coping", "压顶(YD)"]] },
  { name: "自定义" },
  { name: "CAD识别", cad: true },
];

const Tree = () => (
  <ul>
    {tree.map((n) => (
      <li key={n.name}>
        <Branch type="button" aria-expanded={!!n.kids}>
          <Svg width="7" height="8" viewBox="0 0 7 8" aria-hidden="true">
            {n.kids ? <path d="M7 1v6H0z" fill="#333" /> : <path d="M1 .5v7L5 4z" fill="#fff" stroke="#999" />}
          </Svg>
          <Stub />
          <Icon name={n.kids ? "folderopen" : "folder"} />
          <BranchName>{n.name}</BranchName>
          {n.cad && (
            <>
              <Icon name="cad" />
              <NewTag>NEW</NewTag>
            </>
          )}
        </Branch>
        {n.kids && (
          <Leaves>
            {n.kids.map(([icon, label], i) => (
              <Leaf key={label}>
                <LeafButton type="button" $on={n.on === i}>
                  <Icon name={icon} />
                  {label}
                </LeafButton>
              </Leaf>
            ))}
          </Leaves>
        )}
      </li>
    ))}
  </ul>
);

/* ---------- narrow docks ---------- */

const Mini = styled.div<{ $grow?: boolean }>`
  flex: ${(p) => (p.$grow ? "1" : "none")};
  display: flex;
  flex-direction: column;
  min-height: 0;
  border: 1px solid #8b8f97;
  border-top: 0;
  background: ${(p) => (p.$grow ? "#fff" : "#f4f4f4")};
  overflow: hidden;
`;
const MiniArrows = styled.div`
  flex: none;
  display: flex;
  justify-content: flex-end;
  height: 16px;
  margin: 4px 1px 7px 4px;
`;
const ArrowButton = styled.button`
  display: flex;
  flex: 1;
  align-items: center;
  justify-content: center;
  padding: 0;
  border: 1px solid #c4c4c4;
  background: #efefef;
`;
const AddButton = styled.button`
  flex: none;
  height: 24px;
  margin-left: 4px;
  padding: 0 0 0 4px;
  border: 1px solid #9b9b9b;
  background: #f1f1f1;
  text-align: left;
  white-space: nowrap;
`;
const MiniList = styled.div`
  display: flex;
  height: 381px;
  margin: 0 3px 3px 4px;
  padding-right: 3px;
  border: 1px solid #8b8f97;
  background: #fff;
`;
const MiniRows = styled.ol`
  flex: 1;
  min-width: 0;
  margin: 0;
  padding: 8px 0 0;
  list-style: none;
  overflow: hidden;
`;
const MiniRow = styled.li`
  height: 19px;
  padding-left: 3px;
  border-bottom: 1px solid #b9b9b9;
  line-height: 19px;
`;
const ChecksArea = styled.div`
  flex: 1;
  padding: 2px 0 0 12px;
`;
const CheckLine = styled.label`
  display: flex;
  align-items: center;
  gap: 4px;
  height: 14px;
`;
const Check = styled.input<{ $s?: number }>`
  appearance: none;
  flex: none;
  width: ${(p) => p.$s ?? 12}px;
  height: ${(p) => p.$s ?? 12}px;
  border: 1px solid #8e8f8f;
  background: linear-gradient(135deg, #cfd2d6, #fbfbfb);
  box-shadow: inset 0 0 0 1px #f4f4f4;
  &:checked {
    background: linear-gradient(135deg, transparent 45%, #3b5fa8 45%, #3b5fa8 62%, transparent 62%), #e6ebf4;
  }
`;
const ListFoot = styled.i`
  height: 18px;
`;
const Divider = styled.i`
  flex: none;
  height: 9px;
`;

/* ---------- scroll bars ---------- */

const Bar = styled.div<{ $row?: boolean }>`
  display: flex;
  flex-direction: ${(p) => (p.$row ? "row" : "column")};
  ${(p) => (p.$row ? "height: 16px;" : "width: 15px; flex: none;")}
  background: #eeeeee;
`;
const BarButton = styled.button`
  display: flex;
  flex: none;
  align-items: center;
  justify-content: center;
  width: 16px;
  height: 17px;
  padding: 0;
  border: 0;
  background: none;
`;
const Thumb = styled.div<{ $row?: boolean; $size: number; $at?: number }>`
  display: flex;
  flex: none;
  align-items: center;
  justify-content: center;
  border: 1px solid #979797;
  border-radius: 2px;
  ${(p) =>
    p.$row
      ? `width: ${p.$size}px; margin: 1px 0 1px ${p.$at ?? 0}px; background: linear-gradient(#f5f5f5, #e4e4e4 50%, #cfcfcf 51%, #dcdcdc);`
      : `height: ${p.$size}px; margin: ${p.$at ?? 0}px 0 0; background: linear-gradient(90deg, #f5f5f5, #e4e4e4 50%, #cfcfcf 51%, #dcdcdc);`}
`;
const Ridges = ({ row }: { row?: boolean }) => (
  <Svg width="8" height="8" viewBox="0 0 8 8" aria-hidden="true">
    <path d={row ? "M1.500 0v8M4.500 0v8M7.500 0v8" : "M0 1.500h8M0 4.500h8M0 7.500h8"} stroke="#555" />
  </Svg>
);

/* ---------- model view ---------- */

const Main = styled.main`
  flex: 1;
  min-width: 0;
  display: flex;
  flex-direction: column;
`;
const View = styled.div`
  flex: 1;
  min-height: 0;
  background: #000;
  overflow: hidden;
`;
const ViewSvg = styled.svg`
  display: block;
  width: 100%;
  height: 100%;
`;
const CadLabel = styled.text<{ $size: number }>`
  font: 300 ${(p) => p.$size}px Roboto, "Open Sans", sans-serif;
`;
const Cad = ({ x, y, up, size = 32, color = "#ff0", children }: { x: number; y: number; up?: boolean; size?: number; color?: string; children: string }) => (
  <CadLabel $size={size} fill={color} transform={`translate(${x} ${y})${up ? " rotate(-90)" : ""}`}>
    {children}
  </CadLabel>
);
const Bubble = ({ x, y, children }: { x: number; y: number; children: string }) => (
  <g>
    <ellipse cx={x} cy={y} rx="12.5" ry="13" fill="none" stroke="#0a7a0a" />
    <Cad x={x - 3} y={y + 7} size={18} color="#fff">{children}</Cad>
  </g>
);
const Tick = ({ x, y }: { x: number; y: number }) => <path d={`M${x - 7} ${y - 7}l14 14`} stroke="#fff" />;

const Model = () => (
  <ViewSvg viewBox="211 167 1709 820" preserveAspectRatio="xMinYMin slice" fill="none">
    <defs>
      <pattern id="hatch" width="14" height="14" patternUnits="userSpaceOnUse">
        <path d="M0 14L14 0" stroke="#999" />
        <path d="M9 10h2M3 4h1" stroke="#aaa" />
      </pattern>
    </defs>
    <path d="M435.500 167v820M544.500 167v820M217.500 861v126M326.500 861v126" stroke="#444" strokeDasharray="23 9" />

    {/* concrete beams */}
    <path d="M762 167h56v53h191v40H762z" fill="#00009c" />
    <path d="M953 847h967v54H953zM1431 466h68v27h-41v429h41V765h28v185h-96z" fill="#00009c" />
    <path d="M1459 847h40v75h-40z" fill="#000" />
    <path d="M762.500 167v90M818.500 167v53.500h190v36M926.500 833v68.500h504.500M1008 847.500h422M1527 847.500h393M1527 901.500h393M1431.500 874.500h95v75h-95z" stroke="#0a84ff" />
    <path d="M790 167v80M706 247.500h303M1014 874.500h417M1527 874.500h393" stroke="#0ff" strokeDasharray="26 6" />
    <path d="M1498.500 167v298M1526.500 167v298M1498.500 765v80M1526.500 765v80M1627 601.500h293M1627 629.500h293" stroke="#0ff" strokeDasharray="25 7" />
    <path d="M980 167h28.500v39.500H980z" fill="url(#hatch)" stroke="#9f0" />
    <path d="M981 833h27v14h-27z" fill="#999" />
    <path d="M953.500 833v55h55v-55" fill="url(#hatch)" stroke="#9f0" />

    {/* axes */}
    <path d="M544 861.500h1376M540 615.500h958M1622 615.500h298M994.500 167v820M1253.500 167v798M1431.500 167v798M1512.500 167v298M1512.500 765v200M1717.500 167v820" stroke="#f00" />
    <path d="M749.500 167v707M953.500 901v86M524 836l50 54M721 833l57 57M650.500 167v20" stroke="#0a7a0a" />
    <path d="M877.500 220v37M897.500 220v37M1113.500 847v140M1134.500 847v54M1486.500 928v59M482 372.500h90" stroke="#f0f" />
    <path d="M1357 683.500h141M1357 765.500h141" stroke="#f0f" strokeDasharray="26 6" />
    <circle cx="1486.5" cy="928" r="3" stroke="#f0f" />
    <circle cx="537" cy="372" r="54" stroke="#d000d0" />
    <path d="M217 167v694M326 167v694M293 616h251M211 861h289M689 167v80M850 833v69M830 861h76M830 902h76" stroke="#0f0" strokeWidth="2" />
    <path d="M211 615.500h82M500 861.500h44M669 247.500h74" stroke="#0f0" />
    <path d="M1717 300v55M1717 335h203M1357 848v102M1337 861h73M1337 875h74M1337 902h73M1337 950h74M1431 970v17M1512 970v17M1526 970v17" stroke="#0f0" strokeWidth="2" />

    {/* shear wall */}
    <path d="M1498.500 465.500h28v136h95v28h-68v136h-55z" fill="#808080" stroke="#8f0" />

    <Cad x={289} y={423} up size={40} color="#0f0">3500</Cad>
    <Cad x={289} y={787} up size={40} color="#0f0">1800</Cad>
    <Cad x={651} y={228} up size={38} color="#0f0">800</Cad>
    <Cad x={813} y={981} up size={40} color="#0f0">300</Cad>
    <Cad x={1320} y={922} up size={40} color="#0f0">2001</Cad>
    <Cad x={1320} y={1002} up size={40} color="#0f0">50</Cad>
    <Cad x={1353} y={967} size={40} color="#0f0">600</Cad>
    <Cad x={1531} y={967} size={38} color="#0f0">100</Cad>
    <Cad x={1784} y={297} size={40} color="#0f0">1700</Cad>
    <Cad x={854} y={256} up>200x6</Cad>
    <Cad x={1150} y={911}>200x650</Cad>
    <Cad x={1592} y={190}>200x400</Cad>
    <Cad x={1557} y={386} up>200x400</Cad>
    <Cad x={1563} y={873} up>200x650</Cad>
    <path d="M1499 620h54v145h-54z" fill="#808080" />
    <path d="M1553.500 629v136h-55" stroke="#8f0" />
    <Cad x={519} y={368} size={24} color="#fff">1a</Cad>
    <path d="M521 401.500h14" stroke="#fff" />

    <Bubble x={327} y={615}>B</Bubble>
    <Bubble x={327} y={861}>A</Bubble>
    <Bubble x={954} y={180}>1</Bubble>
    <Bubble x={1403} y={180}>4</Bubble>
    <Bubble x={1813} y={180}>8</Bubble>
    <Bubble x={1906} y={615}>B</Bubble>
    <Bubble x={1906} y={861}>A</Bubble>
    <Bubble x={953} y={974}>1</Bubble>
    <Bubble x={994} y={974}>2</Bubble>
    <Bubble x={1253} y={974}>3</Bubble>
    <Bubble x={1431} y={974}>5</Bubble>
    <Bubble x={1512} y={974}>6</Bubble>
    <Bubble x={1717} y={974}>7</Bubble>
    <Tick x={327} y={616} />
    <Tick x={327} y={861} />
    <Tick x={217} y={861} />
    <Tick x={850} y={861} />
    <Tick x={850} y={902} />
    <Tick x={685} y={240} />
    <Tick x={1357} y={861} />
    <Tick x={1357} y={875} />
    <Tick x={1357} y={902} />
    <Tick x={1357} y={950} />
    <path d="M1711 342l13-13" stroke="#fff" />

    {/* coordinate system mark */}
    <path d="M266 937v-40" stroke="#0f0" strokeWidth="4" />
    <path d="M266 887l4 13h-8z" fill="#0f0" />
    <path d="M266 937h40" stroke="#f00" strokeWidth="4" />
    <path d="M315 937l-12-4v8z" fill="#f00" />
    <Cad x={275} y={900} size={14} color="#0f0">Y</Cad>
    <Cad x={303} y={926} size={14} color="#f00">X</Cad>
  </ViewSvg>
);

/* ---------- snap bar and status bar ---------- */

const Dim = styled.label`
  display: flex;
  align-items: center;
  gap: 3px;
  padding-left: 2px;
  color: #7a7a7a;
  white-space: nowrap;
`;
const Spin = styled.span<{ $w: number }>`
  display: flex;
  align-items: center;
  width: ${(p) => p.$w}px;
  height: 23px;
  padding-right: 4px;
  border: 1px solid #777;
`;
const SpinInput = styled.input`
  flex: 1;
  min-width: 0;
  padding: 0 8px 0 0;
  border: 0;
  background: none;
  text-align: right;
  outline: none;
`;
const SpinArrows = styled.span`
  display: flex;
  flex-direction: column;
  gap: 5px;
`;
const PlainCheck = styled.input`
  appearance: none;
  width: 11px;
  height: 11px;
  margin-right: 4px;
  border: 1px solid #999;
`;
const BlackText = styled.span`
  color: #000;
  margin-right: 1px;
`;
const SpinBox = ({ value, w, name }: { value: string; w: number; name: string }) => (
  <Spin $w={w}>
    <SpinInput aria-label={name} defaultValue={value} />
    <SpinArrows>
      <Tri dir="up" color="#666" w={5} />
      <Tri color="#666" w={5} />
    </SpinArrows>
  </Spin>
);

const Status = styled.footer`
  flex: none;
  display: flex;
  gap: 2px;
  height: 22px;
  padding: 2px 0 1px;
  background: #f0f0f0;
  font-family: ${SONG};
`;
const StatusCell = styled.div<{ $w?: number }>`
  flex: ${(p) => (p.$w ? "none" : "1")};
  width: ${(p) => (p.$w ? `${p.$w}px` : "auto")};
  padding-left: 1px;
  border: 1px solid #d2d2d2;
  border-left-color: #fff;
  background: linear-gradient(#f4f4f4, #fcfcfc);
  line-height: 18px;
  white-space: nowrap;
`;
const TaskBar = styled.div`
  flex: none;
  display: flex;
  height: 8px;
  border-top: 1px solid #1b3c55;
  background: linear-gradient(90deg, #2e6788, #3f87b0 20%, #2f7fb8 45%, #2a86cc 60%, #1d5fa8 75%, #153f70 85%, #12325c);
  overflow: hidden;
`;
const Clock = styled.time`
  margin-left: auto;
  padding: 3px 30px 0 0;
  color: #fff;
  line-height: 14px;
`;

/* ---------- dialog ---------- */

const Dialog = styled.section`
  position: absolute;
  left: 565px;
  top: 249px;
  width: 790px;
  padding: 0 5px 5px;
  border: 1px solid #c3c8cb;
  border-radius: 6px;
  background:
    linear-gradient(90deg, transparent 0 8px, #080f14 8px calc(100% - 8px), transparent 0),
    linear-gradient(#787b7d, #55585a 60px, #b0b2b3 130px, #d6d7d8 163px, #0c1418 164px);
  font-family: ${SONG};
`;
const DialogTitle = styled.div`
  display: flex;
  justify-content: space-between;
  height: 27px;
  margin: 0 -5px;
  padding: 0 5px 0 6px;
  border-radius: 5px 5px 0 0;
  background:
    linear-gradient(rgba(255, 255, 255, 0.18), transparent 50%),
    linear-gradient(90deg, #a0a3a5, #8f9294 70px, #3c4043 100px, #1a2622 118px, #22603d 125px, #1a2a22 134px, #0a1010 186px, #0b0b66 200px, #0d0d74 440px, #090d14 450px, #0b1016 550px, #5b5e60 650px, #6d7073);
`;
const DialogName = styled.h2`
  margin: 0;
  font: 400 12px/26px ${UI};
  text-shadow: 0 0 6px #fff, 0 0 8px #ddd;
`;
const CloseButton = styled.button`
  display: flex;
  align-items: center;
  justify-content: center;
  width: 47px;
  height: 19px;
  padding: 0;
  border: 1px solid #e3b2a8;
  border-top: 0;
  border-radius: 0 0 5px 5px;
  background: linear-gradient(#d99f92, #c9705d 45%, #a82c14 50%, #c0452a 80%, #e0806a);
`;
const Client = styled.div`
  padding: 7px 12px 7px 9px;
  border: 1px solid #b9bdc0;
  background: #f0f0f0;
`;
const Columns = styled.div`
  display: flex;
  gap: 15px;
  margin-left: 3px;
`;
const Field = styled.fieldset<{ $w?: number }>`
  flex: ${(p) => (p.$w ? "none" : "1")};
  min-width: 0;
  width: ${(p) => (p.$w ? `${p.$w}px` : "auto")};
  margin: 0;
  padding: 0;
  border: 1px solid #d5dfe8;
  border-radius: 3px;
  box-shadow: 1px 1px 0 #fff;
`;
const NoteField = styled(Field)`
  margin-right: 5px;
`;
const Legend = styled.legend`
  margin-left: 5px;
  padding: 0 1px;
  line-height: 14px;
`;
const Picture = styled.svg`
  display: block;
  width: 232px;
  height: 302px;
  margin: 9px 0 20px 14px;
  background: #000;
`;
const PicText = styled.text<{ $size?: number }>`
  font: ${(p) => p.$size ?? 12}px ${SONG};
  fill: #fff;
`;
const Choices = styled.div`
  display: flex;
  align-items: center;
  height: 29px;
  margin: 4px 12px 7px 10px;
  padding: 9px 0 0 7px;
  border: 1px solid #d5dfe8;
  border-radius: 3px;
`;
const Choice = styled.label`
  display: flex;
  align-items: center;
  gap: 4px;
  width: 221px;
  line-height: 14px;
`;
const Radio = styled.input`
  appearance: none;
  width: 12px;
  height: 12px;
  border: 1px solid #8e8f8f;
  border-radius: 50%;
  background: radial-gradient(#fff, #dadada);
  &:checked {
    background: radial-gradient(#3fb0e8 0 1px, #14507c 3px, #eef 4px);
  }
`;
const GridFrame = styled.div`
  display: grid;
  grid-template-columns: 1fr 16px;
  grid-template-rows: 225px 16px;
  margin: 0 12px 12px 10px;
  padding: 1px;
  border: 1px solid #a0a4a8;
  background: #f0f0f0;
`;
const Clip = styled.div`
  overflow: hidden;
  background: #fff;
`;
const Table = styled.table`
  width: 100%;
  table-layout: fixed;
  border-spacing: 0;
`;
const Th = styled.th<{ $w?: number }>`
  width: ${(p) => (p.$w ? `${p.$w}px` : "auto")};
  height: 19px;
  padding: 0 0 0 12px;
  border-right: 1px solid #c0c0c0;
  border-bottom: 1px solid #c0c0c0;
  background: linear-gradient(#fff, #f1f1f1);
  font-weight: 400;
  line-height: 18px;
  white-space: nowrap;
`;
const Td = styled.td`
  height: 19px;
  padding: 0 0 0 2px;
  border-right: 1px solid #c0c0c0;
  border-bottom: 1px solid #c0c0c0;
  line-height: 18px;
  white-space: nowrap;
`;
const Grade = styled.svg`
  display: inline-block;
  vertical-align: -2px;
  margin: 0 2px;
`;
const ButtonRow = styled.div<{ $gap?: number; $top?: number; $bottom?: number; $right?: number }>`
  display: flex;
  justify-content: flex-end;
  gap: ${(p) => p.$gap ?? 0}px;
  margin: ${(p) => p.$top ?? 0}px ${(p) => p.$right ?? 0}px ${(p) => p.$bottom ?? 0}px 0;
`;
const Gap = styled.i<{ $wide?: boolean }>`
  width: ${(p) => (p.$wide ? 57 : 48)}px;
`;
const Push = styled.button<{ $w: number; $main?: boolean }>`
  width: ${(p) => p.$w}px;
  height: 23px;
  padding: 0;
  border: 1px solid ${(p) => (p.$main ? "#2c7fb0" : "#707070")};
  border-radius: 3px;
  background: ${(p) => (p.$main ? "linear-gradient(#eaf6fc, #d6ecf8 50%, #bcdff1 51%, #b6dcf0)" : "linear-gradient(#f3f3f3, #ebebeb 50%, #dcdcdc 51%, #cfcfcf)")};
  box-shadow: inset 0 0 0 1px ${(p) => (p.$main ? "#3cc3f2" : "#fbfbfb")};
  line-height: 20px;
`;
const Options = styled.div`
  margin: 16px 0 0 18px;
`;
const Option = styled.label`
  display: flex;
  align-items: center;
  gap: 2px;
  height: 22px;
`;
const Notes = styled.ol`
  margin: 0;
  padding: 0 0 9px 14px;
  list-style: none;
  line-height: 18px;
`;
const Indent = styled.div`
  padding-left: 18px;
`;

const rows: [string, string, string, string][] = [
  ["200~249", "450~500", "G4", "8"],
  ["200~249", "501~600", "G4", "10"],
  ["200~249", "601~750", "G6", "8"],
  ["200~249", "751~800", "G6", "10"],
  ["200~249", "801~1000", "G8", "8"],
  ["200~249", "1001~1050", "G8", "10"],
  ["200~249", "1051~1200", "G10", "8"],
  ["250~299", "450~600", "G4", "10"],
  ["250~299", "601~800", "G6", "10"],
  ["250~299", "801~1050", "G8", "10"],
  ["250~299", "1051~1100", "G10", "8"],
];

const dots = [
  [67, 64], [96, 64], [126, 64], [67, 76], [96, 76], [126, 76], [67, 122], [126, 122], [67, 151], [126, 151],
  [67, 177], [126, 177], [67, 197], [96, 197], [126, 197], [67, 208], [82, 208], [96, 208], [111, 208], [126, 208],
];

const Section = () => (
  <Picture viewBox="0 0 232 302" fill="none">
    <path d="M30.500 48v23l9 7.500-18 0 9 8v18M166.500 48v23l9 7-18 0 9 8v18M30 54.500h137M30 91.500h26.500v129h83v-129h27" stroke="#fff" />
    <rect x="64" y="61" width="67" height="151" stroke="#f00" strokeWidth="2" />
    <path d="M64 119h67M64 148h67M67 61l12 10M65 68l10 9M66 124l6 8M130 124l-6 8M66 153l6 8M130 153l-6 8" stroke="#f00" strokeWidth="2" />
    {dots.map(([x, y]) => (
      <path key={`${x}-${y}`} d={`M${x + 0.5} ${y - 2}l2.500 2.500-2.500 2.500-2.500-2.500z`} fill="#0f0" />
    ))}
    <path d="M14 133.500h84.500v-14M17 164.500h109.500v-13M69.500 164v-13" stroke="#fff" />
    <path d="M56.500 231v15M139.500 231v15M56 238.500h84M53 242l7-7M136 242l7-7" stroke="#fff" />
    <path d="M177.500 91v88M197.500 91v130M218.500 54v167" stroke="#fff" />
    <path d="M170 91.500h14M170 122.500h14M170 151.500h14M170 179.500h14M189 91.500h15M189 201.500h15M189 220.500h15M211 54.500h14M211 220.500h14" stroke="#fff" />
    <path d="M174 88l7 6M174 119l7 6M174 148l7 6M174 176l7 6M194 88l7 6M194 198l7 6M194 217l7 6M215 51l7 6M215 217l7 6" stroke="#fff" />
    <PicText x="20" y="128">拉筋</PicText>
    <PicText x="6" y="159">侧面纵筋</PicText>
    <PicText x="182" y="110">a</PicText>
    <PicText x="182" y="141">a</PicText>
    <PicText x="182" y="170">a</PicText>
    <PicText x="199" y="153">hw</PicText>
    <PicText x="223" y="158">h</PicText>
    <PicText x="201" y="215">s</PicText>
    <PicText x="92" y="252">b</PicText>
    <PicText x="53" y="278" $size={15}>梁截面示意图</PicText>
    <path d="M58 284h86" stroke="#fff" strokeWidth="2" />
  </Picture>
);

const SideBarDialog = () => {
  const [mode, setMode] = useState("hw");
  return (
    <Dialog role="dialog" aria-label="生成侧面钢筋">
      <DialogTitle>
        <DialogName>生成侧面钢筋</DialogName>
        <CloseButton type="button" aria-label="关闭">
          <Svg width="12" height="10" viewBox="0 0 12 10">
            <path d="M2.500 1.500l7 7M9.500 1.500l-7 7" stroke="#44201a" strokeWidth="4" />
            <path d="M2.500 1.500l7 7M9.500 1.500l-7 7" stroke="#fff" strokeWidth="2.4" />
          </Svg>
        </CloseButton>
      </DialogTitle>
      <Client>
        <Columns>
          <Field $w={262}>
            <Legend>示意图</Legend>
            <Section />
          </Field>
          <Field>
            <Legend>侧面钢筋设置</Legend>
            <Choices>
              <Choice>
                <Radio type="radio" name="mode" checked={mode === "hw"} onChange={() => setMode("hw")} />
                梁腹板高(hw)
              </Choice>
              <Choice>
                <Radio type="radio" name="mode" checked={mode === "h"} onChange={() => setMode("h")} />
                梁高(h)
              </Choice>
            </Choices>
            <GridFrame>
              <Clip>
                <Table>
                  <thead>
                    <tr>
                      <Th $w={121}>梁宽(单位:mm)</Th>
                      <Th $w={123}>梁腹板高(单位:mm)</Th>
                      <Th>侧面构造或受扭筋(总配筋值)</Th>
                    </tr>
                  </thead>
                  <tbody>
                    {rows.map(([a, b, g, d]) => (
                      <tr key={a + b}>
                        <Td>{a}</Td>
                        <Td>{b}</Td>
                        <Td>
                          {g}
                          <Grade width="10" height="11" viewBox="0 0 10 11" aria-label="三级钢">
                            <path d="M5.500 0v11M2.500 2.500h6v4h-6zM1 8.500h9M3 10.500h6M1.500 3v3M9.500 3v3" fill="none" stroke="#222" />
                          </Grade>
                          {d}
                        </Td>
                      </tr>
                    ))}
                  </tbody>
                </Table>
              </Clip>
              <Bar>
                <BarButton type="button" aria-label="向上滚动"><Tri dir="up" color="#444" /></BarButton>
                <Thumb $size={46} $at={2}><Ridges /></Thumb>
                <Spacer />
                <BarButton type="button" aria-label="向下滚动"><Tri color="#444" /></BarButton>
              </Bar>
              <Bar $row>
                <BarButton type="button" aria-label="向左滚动"><Tri dir="left" color="#444" /></BarButton>
                <Thumb $row $size={128} $at={2}><Ridges row /></Thumb>
                <Spacer />
                <BarButton type="button" aria-label="向右滚动"><Tri dir="right" color="#444" /></BarButton>
              </Bar>
            </GridFrame>
            <ButtonRow $right={33}>
              <Push type="button" $w={95}>梁腹板高设置</Push>
              <Gap />
              <Push type="button" $w={73}>添加行</Push>
              <Gap $wide />
              <Push type="button" $w={73}>删除行</Push>
            </ButtonRow>
          </Field>
        </Columns>
        <Options>
          <Option>
            <Check type="checkbox" $s={13} />
            整楼生成
          </Option>
          <Option>
            <Check type="checkbox" $s={13} />
            布置范围内，梁跨中有侧面钢筋信息时覆盖原钢筋信息。
          </Option>
        </Options>
        <NoteField>
          <Legend>说明</Legend>
          <Notes>
            <li>1.侧面钢筋输入格式：(G或N)数量+级别+直径，如：G2B25</li>
            <li>2.未在截面限制条件内的不布置侧面纵筋</li>
            <li>
              3.a-为侧面钢筋间距；hw-梁的腹板高度；h-梁高；s-梁的纵向钢筋合力点距离。来源于12G901-1 P1-2。
              <Indent>腹板高度取有效高度。来源于《混凝土结构设计规范》GB50010-2010 P55。</Indent>
            </li>
          </Notes>
        </NoteField>
        <ButtonRow $gap={36} $top={7} $right={5}>
          <Push type="button" $w={72} $main>确定</Push>
          <Push type="button" $w={72}>取消</Push>
        </ButtonRow>
      </Client>
    </Dialog>
  );
};

/* ---------- floating helpers ---------- */

const Ime = styled.div`
  position: absolute;
  left: 1678px;
  top: 671px;
  display: flex;
  align-items: center;
  gap: 8px;
  height: 31px;
  padding: 0 4px;
  border: 1px solid #b7c7dc;
  border-radius: 3px;
  background: #fff;
  color: #0a5bc4;
`;
const ImeMode = styled.b`
  margin-left: -3px;
  padding-left: 10px;
  border-left: 1px solid #f3c0ac;
  font-size: 14px;
  line-height: 29px;
`;
const Meter = styled.div`
  position: absolute;
  left: 1741px;
  top: 785px;
  display: flex;
  align-items: center;
  height: 48px;
`;
const Ball = styled.div`
  z-index: 1;
  display: flex;
  align-items: center;
  justify-content: center;
  width: 48px;
  height: 48px;
  margin-right: -24px;
  border: 2px solid #e8e8e8;
  border-radius: 50%;
  background: linear-gradient(#2f9a72, #0e7048 38%, #46c95c 40%, #58dd66);
  box-shadow: inset 0 0 0 1px #0e6a40;
  color: #fff;
  font-size: 14px;
`;
const Pill = styled.div`
  display: grid;
  grid-template-columns: 9px 39px 20px;
  align-items: center;
  height: 38px;
  padding: 2px 6px 2px 28px;
  border-radius: 19px;
  background: linear-gradient(#f4f4f4, #d4d4d4);
  font: 10px/15px ${UI};
  text-align: right;
  white-space: nowrap;
`;
const Plus = styled.span`
  grid-area: 1 / 3 / 3 / 4;
  justify-self: end;
`;
const Arrows = styled.svg`
  position: absolute;
  inset: 0;
  width: 100%;
  height: 100%;
  pointer-events: none;
`;

export default function App() {
  return (
    <Page>
      <Global />
      <TitleBar>
        <Icon name="app" />
        <Title>广联达BIM钢筋算量软件 GGJ2013 - [H:\5.金科蔡家三标段\5.预算软件\8.A8#楼\1.钢筋\博翠山A8#楼2018.5.22.GGJ12]</Title>
        <WinButtons>
          <WinButton type="button" aria-label="最小化">
            <Svg width="12" height="5" viewBox="0 0 12 5"><rect x=".5" y=".5" width="11" height="4" rx="1" fill="#fff" stroke="#555" /></Svg>
          </WinButton>
          <WinButton type="button" aria-label="还原">
            <Svg width="12" height="12" viewBox="0 0 12 12"><path d="M3.500.5h8v8h-2M.5 3.500h8v8h-8zM3.500 6.500h2v2h-2z" fill="#fff" stroke="#555" /></Svg>
          </WinButton>
          <WinButton type="button" $wide aria-label="关闭窗口">
            <Svg width="12" height="11" viewBox="0 0 12 11"><path d="M1 .5h3l2 2.500L8 .5h3L7.500 5.500l3.500 5H8L6 8l-2 2.500H1l3.500-5z" fill="#fff" stroke="#555" /></Svg>
          </WinButton>
        </WinButtons>
      </TitleBar>

      <MenuBar>
        {["文件(F)", "编辑(E)", "楼层(L)", "构件(N)", "绘图(D)", "修改(M)", "钢筋量(Q)", "视图(V)", "工具(T)", "云应用(Y)", "BIM应用(I)", "在线服务(S)", "帮助(H)", "版本号(B)"].map((m) => (
          <MenuItem type="button" key={m}>{m}</MenuItem>
        ))}
        <MenuItem type="button"><Icon name="robot" />广小二</MenuItem>
        <Spacer />
        <Hint href="#help">生成侧面钢筋如何操作..</Hint>
        <Account>
          <Tool icon="user" text="18883646838" drop />
          <MenuItem type="button">造价豆:0</MenuItem>
          <Tool icon="bell" name="消息" />
          <Tool icon="comment" text="我要建议" />
        </Account>
      </MenuBar>

      <Strip>
        <Group>
          <Tool icon="file" name="新建" />
          <Tool icon="open" name="打开" drop />
          <Tool icon="save" name="保存" off />
          <Sep $dark />
          <Tool icon="undo" name="撤销" off drop />
          <Tool icon="redo" name="重做" off drop />
        </Group>
        <Group><Tools items={mainTools} /></Group>
        <Group><Tools items={viewTools} /></Group>
      </Strip>

      <Body>
        <Dock $w={165} $gap={5}>
          <DockHead>
            <HeadText>模块导航栏</HeadText>
            <HeadButton type="button" aria-label="固定">
              <Svg width="8" height="9" viewBox="0 0 8 9"><path d="M2 .5h4v4H2zM0 5h8M4 5v4M5.500 0v5" stroke="#000" fill="none" /></Svg>
            </HeadButton>
            <HeadButton type="button" aria-label="关闭导航栏">
              <Svg width="9" height="9" viewBox="0 0 9 9"><path d="M1 1l7 7M8 1L1 8" stroke="#000" /></Svg>
            </HeadButton>
          </DockHead>
          <Shelf type="button">工程设置</Shelf>
          <Shelf type="button">绘图输入</Shelf>
          <TreeTools>
            <HeadButton type="button" aria-label="全部展开">
              <Svg width="17" height="15" viewBox="0 0 17 15"><path d="M5 1v8M1 5h8M12 6v8M8 10h8" stroke="#000" strokeWidth="3" /><path d="M5 2v6M2 5h6M12 7v6M9 10h6" stroke="#2f8f86" /></Svg>
            </HeadButton>
            <HeadButton type="button" aria-label="全部折叠">
              <Svg width="17" height="15" viewBox="0 0 17 15"><path d="M1 4h8M7 10h8" stroke="#000" strokeWidth="3" /><path d="M2 4h6M8 10h6" stroke="#2f8f86" /></Svg>
            </HeadButton>
          </TreeTools>
          <TreeBox><Tree /></TreeBox>
          <Shelf type="button">单构件输入</Shelf>
          <Shelf type="button">报表预览</Shelf>
        </Dock>

        <Dock $w={38} $gap={3}>
          <DockHead $slim>
            <HeadText>图..</HeadText>
            <HeadButton type="button" aria-label="关闭图元面板">
              <Svg width="8" height="8" viewBox="0 0 9 9"><path d="M1 1l7 7M8 1L1 8" stroke="#000" /></Svg>
            </HeadButton>
          </DockHead>
          <Mini>
            <MiniArrows>
              <ArrowButton type="button" aria-label="上一页"><Tri dir="left" color="#34507c" w={6} /></ArrowButton>
              <ArrowButton type="button" aria-label="下一页"><Tri dir="right" color="#34507c" w={6} /></ArrowButton>
            </MiniArrows>
            <AddButton type="button">添加</AddButton>
            <MiniList>
              <MiniRows>
                {["", "6", "6", "6", "6", "6", "6", "6", "7", "7", "7", "7", "7", "7", "7", "7", "7", "7", "8"].map((n, i) => (
                  <MiniRow key={i}>{n}</MiniRow>
                ))}
              </MiniRows>
              <Bar>
                <BarButton type="button" aria-label="列表向上"><Tri dir="up" color="#444" /></BarButton>
                <Thumb $size={46} $at={195}><Ridges /></Thumb>
                <Spacer />
                <BarButton type="button" aria-label="列表向下"><Tri color="#444" /></BarButton>
                <ListFoot />
              </Bar>
            </MiniList>
          </Mini>
          <Divider />
          <DockHead $slim>
            <HeadText>CA..</HeadText>
            <HeadButton type="button" aria-label="关闭图层面板">
              <Svg width="8" height="8" viewBox="0 0 9 9"><path d="M1 1l7 7M8 1L1 8" stroke="#000" /></Svg>
            </HeadButton>
          </DockHead>
          <Mini $grow>
            <ChecksArea>
              {[false, true].map((on, i) => (
                <CheckLine key={i}>
                  <Svg width="6" height="8" viewBox="0 0 6 8"><path d="M1 .5v7L5 4z" fill="#fff" stroke="#999" /></Svg>
                  <Check type="checkbox" defaultChecked={on} aria-label={`图层 ${i + 1}`} />
                </CheckLine>
              ))}
            </ChecksArea>
            <Bar $row>
              <BarButton type="button" aria-label="图层向左"><Tri dir="left" color="#222" /></BarButton>
              <Spacer />
              <BarButton type="button" aria-label="图层向右"><Tri dir="right" color="#222" /></BarButton>
            </Bar>
          </Mini>
        </Dock>

        <Main>
          <Strip>
            <Group><Grip /><Tools items={editTools} /></Group>
          </Strip>
          <Strip $h={28}>
            <Group>
              <Grip />
              <Combo value="屋面层" w={58} name="楼层" />
              <Combo value="梁" w={69} name="构件类型" />
              <Combo value="梁" w={69} name="构件种类" />
              <Combo value="XL3" w={69} name="构件" />
              <Combo value="分层1" w={69} name="分层" />
              <Sep />
              <Tools items={partTools} />
            </Group>
            <Group><Grip /><Tools items={axisTools} /></Group>
          </Strip>
          <Strip>
            <Group $grow>
              <Grip />
              <Tools items={drawTools} />
              <Combo value="" w={55} name="弧参数" />
              <Tools items={beamTools} />
              <Spacer />
              <More type="button" aria-label="更多按钮">»</More>
            </Group>
            <Group><Grip /><Tail /></Group>
          </Strip>
          <View><Model /></View>
          <Strip $h={31}>
            <Group>
              <Grip />
              <Tool icon="ortho" text="正交" />
              <Tool icon="snap" text="对象捕捉" on />
              <Tool icon="dynin" text="动态输入" on />
            </Group>
            <Group>
              <Grip />
              <Tool icon="cross" text="交点" />
              <Tool icon="perp" text="垂点" />
              <Tool icon="mid" text="中点" on />
              <Tool icon="vertex" text="顶点" />
              <Tool icon="coord" text="坐标" />
            </Group>
            <Group>
              <Grip />
              <Combo value="不偏移" w={58} name="偏移方式" />
              <Sep $dark />
              <Dim>X=<SpinBox value="0" w={58} name="X 偏移" />mm</Dim>
              <Dim>&nbsp;Y=<SpinBox value="0" w={58} name="Y 偏移" />mm</Dim>
              <Sep $dark />
              <Dim>
                <PlainCheck type="checkbox" aria-label="旋转" />
                <BlackText>旋转</BlackText>
                <SpinBox value="0.000" w={68} name="旋转角度" />°
              </Dim>
            </Group>
          </Strip>
        </Main>
      </Body>

      <Status>
        <StatusCell $w={148}>X=82794 Y=173744</StatusCell>
        <StatusCell $w={78}>层高:2.2m</StatusCell>
        <StatusCell $w={98}>底标高:77.95m</StatusCell>
        <StatusCell $w={48}>0</StatusCell>
        <StatusCell>按鼠标左键指定第一个角点，或拾取构件图元</StatusCell>
        <StatusCell $w={70}>6.7 FPS</StatusCell>
      </Status>
      <TaskBar>
        <Svg width="700" height="8" viewBox="0 0 700 8" aria-hidden="true">
          <circle cx="27" cy="15" r="15" fill="#cfdde6" />
          <circle cx="77" cy="9" r="7" fill="#d8e21a" />
          <circle cx="92" cy="9" r="6" fill="#8fd0f2" />
          <circle cx="146" cy="14" r="12" fill="#2f9ae6" />
          <circle cx="160" cy="7" r="5" fill="#eab01c" />
          {[[180, "#7dba6a"], [242, "#d8bf86"], [305, "#3c4a5c"], [366, "#0a8bf0"], [427, "#f4a261"], [490, "#2a8fe0"], [552, "#31c264"]].map(([x, c]) => (
            <g key={x}>
              <path d={`M${x} 8V1h58v7`} fill={x === 366 ? "#f0fbff" : "#a3c6db"} stroke="#17364e" />
              <path d={`M${Number(x) + 14} 8c1-6 29-6 30 0z`} fill={String(c)} />
            </g>
          ))}
        </Svg>
        <Clock>16:41 周二</Clock>
      </TaskBar>

      <SideBarDialog />

      <Ime>
        <Svg width="31" height="29" viewBox="0 0 31 29">
          <path d="M1 6l22-5c3 0 4 1 4 3l3 17c0 2-1 3-3 4L8 28c-2 0-3-1-4-3L0 9c0-2 0-3 1-3z" fill="#f4581f" />
          <path d="M23 7C15 5 8 8 9 12c1 4 12 1 12 5 0 4-8 5-14 2" stroke="#fff" strokeWidth="4" fill="none" />
        </Svg>
        <ImeMode>英</ImeMode>
        <Svg width="16" height="16" viewBox="0 0 16 16"><circle cx="4" cy="4" r="2" fill="#0a5bc4" /><path d="M11 8h2v2l-2 3" stroke="#0a5bc4" strokeWidth="2" fill="none" /></Svg>
        <Svg width="18" height="18" viewBox="0 0 18 18"><circle cx="9" cy="9" r="7.500" fill="none" stroke="#0a5bc4" strokeWidth="1.7" /><path d="M6 6v2M12 6v2M5 10c1 4 7 4 8 0" stroke="#0a5bc4" strokeWidth="1.6" fill="none" /></Svg>
        <Svg width="16" height="16" viewBox="0 0 16 16"><path d="M10 2l4 4-7 7H3V9zM3 13l-2 2" stroke="#0a5bc4" strokeWidth="1.7" fill="none" /></Svg>
        <Svg width="16" height="16" viewBox="0 0 16 16"><rect x="5" y="0" width="6" height="9" rx="3" fill="#0a5bc4" /><path d="M3 6c0 7 10 7 10 0M8 11v4M5 15h6" stroke="#0a5bc4" strokeWidth="1.6" fill="none" /></Svg>
        <Svg width="14" height="14" viewBox="0 0 14 14"><path d="M0 0h6v6H0zM0 8h6v6H0zM8 8h6v6H8z" fill="#0a5bc4" /><path d="M9 1h4v4H9z" stroke="#0a5bc4" strokeWidth="1.6" fill="none" /></Svg>
      </Ime>

      <Meter>
        <Ball>60%</Ball>
        <Pill>
          <Svg width="7" height="9" viewBox="0 0 7 9"><path d="M3.500 9V2M1 4l2.500-3L6 4" stroke="#e2533f" strokeWidth="1.5" fill="none" /></Svg>
          <span>0.05K/s</span>
          <Svg width="7" height="9" viewBox="0 0 7 9"><path d="M3.500 0v7M1 5l2.500 3L6 5" stroke="#219a4f" strokeWidth="1.5" fill="none" /></Svg>
          <span>0.2K/s</span>
          <Plus>
            <Svg width="18" height="20" viewBox="0 0 18 20"><circle cx="8" cy="11" r="8" fill="#2f78d8" /><path d="M8 7v8M4 11h8" stroke="#fff" strokeWidth="1.6" /><circle cx="14" cy="5" r="4" fill="#d92b2b" /></Svg>
          </Plus>
        </Pill>
      </Meter>

      <Arrows aria-hidden="true">
        <g fill="#fb3c38">
          <path d="M115 370l25 7-4 7 235 215-1 1-240-210-5 5z" />
          <path d="M1878 156l-23 8 6 7-253 275 1 1 260-271 3 4z" />
          <path d="M931 568l-24 3 4 7-276 185 1 1 280-179 4 4z" />
        </g>
      </Arrows>
    </Page>
  );
}
